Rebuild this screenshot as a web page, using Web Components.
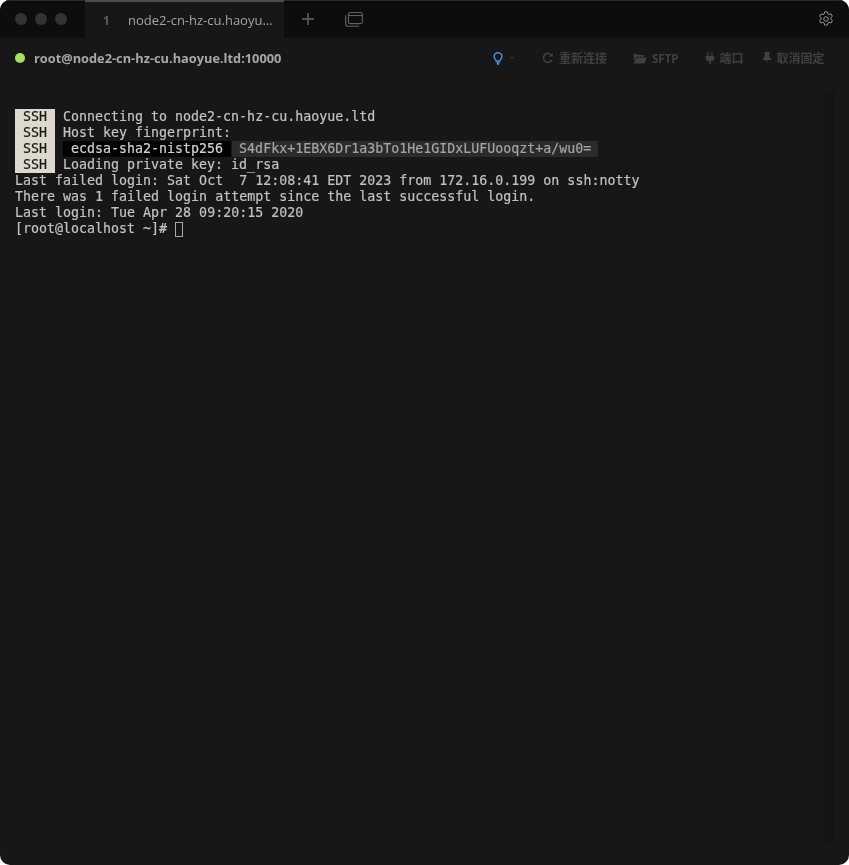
<!DOCTYPE html>
<html>
<head>
<meta charset="utf-8">
<style>
  html, body { margin: 0; height: 100%; background: #ffffff; }
  body { font-family: "Open Sans", "Noto Sans CJK SC", sans-serif; }
</style>
</head>
<body>
<term-window>
  <tab-bar slot="tabs"></tab-bar>
  <session-bar slot="session"></session-bar>
  <term-screen slot="screen"></term-screen>
</term-window>

<script>
class TermWindow extends HTMLElement {
  constructor() {
    super();
    this.attachShadow({ mode: "open" });
  }

  connectedCallback() {
    this.shadowRoot.innerHTML = `
      <style>
        :host {
          display: flex;
          flex-direction: column;
          width: 849px;
          height: 865px;
          background: #171717;
          border-radius: 10px;
          overflow: hidden;
        }
      </style>
      <slot name="tabs"></slot>
      <slot name="session"></slot>
      <slot name="screen"></slot>
    `;
  }
}
customElements.define("term-window", TermWindow);

class TabBar extends HTMLElement {
  constructor() {
    super();
    this.attachShadow({ mode: "open" });
  }

  connectedCallback() {
    this.shadowRoot.innerHTML = `
      <style>
        :host {
          display: flex;
          align-items: stretch;
          height: 38px;
          background: #0d0d0d;
          box-shadow: inset 0 1px #2a2a2a;
          font-family: "Open Sans", sans-serif;
        }
        .lights {
          display: flex;
          align-items: center;
          gap: 8px;
          width: 85px;
          box-sizing: border-box;
          padding: 0 0 0 15px;
        }
        .lights i {
          width: 12px;
          height: 12px;
          border-radius: 50%;
          background: #333333;
        }
        .tab {
          display: flex;
          align-items: center;
          width: 199px;
          box-sizing: border-box;
          padding: 0 0 0 18px;
          background: #171717;
          border-top: 2px solid #4d4d4d;
          color: #a3a3a3;
          font-size: 13px;
        }
        .num {
          width: 25px;
          color: #5c5c5c;
          font-weight: 700;
          font-size: 12px;
          will-change: transform;
        }
        .title { white-space: nowrap; will-change: transform; }
        .add { margin: 0 0 0 16px; align-self: center; display: block; }
        .win { margin: 0 0 0 29px; align-self: center; display: block; }
        .gear { margin: 0 15px 0 auto; align-self: center; display: block; }
      </style>
      <div class="lights"><i></i><i></i><i></i></div>
      <div class="tab"><span class="num">1</span><span class="title">node2-cn-hz-cu.haoyu…</span></div>
      <svg class="add" width="16" height="16" viewBox="0 0 16 16"><path d="M8 2v12M2 8h12" stroke="#616161" stroke-width="1.5" fill="none"/></svg>
      <svg class="win" width="18" height="16" viewBox="0 0 19 17" fill="none" stroke="#616161" stroke-width="1.2"><rect x="3.6" y="1.6" width="14.8" height="11.8" rx="2"/><path d="M3.6 4.8h14.8"/><path d="M.6 4.6v9.2a2.4 2.4 0 0 0 2.4 2.4h12"/></svg>
      <svg class="gear" width="16" height="16" viewBox="0 0 16 16" fill="none" stroke="#959595" stroke-width="1"><path d="M6.6.8h2.8l.4 2 1.2.7 2-.6 1.400 2.400-1.500 1.400v1.500l1.500 1.400-1.400 2.400-2-.6-1.200.7-.4 2H6.600l-.4-2-1.200-.7-2 .6-1.400-2.400 1.500-1.400V6.700L1.600 5.300 3 2.900l2 .6 1.200-.7z" stroke-linejoin="round"/><circle cx="8" cy="8" r="2.300"/></svg>
    `;
  }
}
customElements.define("tab-bar", TabBar);

class SessionBar extends HTMLElement {
  constructor() {
    super();
    this.attachShadow({ mode: "open" });
  }

  connectedCallback() {
    this.shadowRoot.innerHTML = `
      <style>
        :host {
          display: flex;
          align-items: center;
          height: 39px;
          padding: 0 24px 0 15px;
          font-family: "Open Sans", "Noto Sans CJK SC", sans-serif;
        }
        .dot {
          width: 10px;
          height: 10px;
          border-radius: 50%;
          background: #a3e45a;
          margin: 0 9px 0 0;
        }
        .host {
          color: #a8a8a8;
          font-size: 12.8px;
          font-weight: 700;
          white-space: nowrap;
          will-change: transform;
        }
        .actions {
          margin: 0 0 0 auto;
          display: flex;
          align-items: center;
          color: #404040;
          font-size: 12px;
          font-weight: 700;
          will-change: transform;
        }
        .item { display: flex; align-items: center; gap: 5px; white-space: nowrap; }
        svg { display: block; }
        .caret {
          width: 0;
          height: 0;
          border: 2.5px solid transparent;
          border-top-color: #3a3a3a;
          border-bottom: 0;
          margin: 0 0 0 7px;
        }
        .sftp { font-size: 11.5px; }
      </style>
      <span class="dot"></span>
      <span class="host">root@node2-cn-hz-cu.haoyue.ltd:10000</span>
      <div class="actions">
        <div class="item" style="gap:0">
          <svg width="10" height="13" viewBox="0 0 12 15" fill="none" stroke="#4a90e2" stroke-width="1.700"><path d="M3.800 10.500C3.500 8.800 1.300 7.800 1.300 5.200a4.700 4.700 0 0 1 9.400 0c0 2.600-2.200 3.600-2.500 5.300z"/><path d="M4.200 12.500h3.600M5 14.300h2"/></svg>
          <span class="caret"></span>
        </div>
        <div class="item" style="margin-left:28px">
          <svg width="12" height="12" viewBox="0 0 13 13" fill="none" stroke="#404040" stroke-width="1.800"><path d="M10.800 8.200A4.800 4.800 0 1 1 9.800 3"/><path d="M11.600 .8v4.200H7.400z" fill="#404040" stroke="none"/></svg>
          <span>重新连接</span>
        </div>
        <div class="item" style="margin-left:26px">
          <svg width="14" height="11" viewBox="0 0 15 12" fill="#404040"><path d="M0 2a1 1 0 0 1 1-1h3.500l1.300 1.300H11a1 1 0 0 1 1 1V4H3.500L1 9.500V3H0z"/><path d="M3.800 5H15l-2.600 6.500H.8z"/></svg>
          <span class="sftp">SFTP</span>
        </div>
        <div class="item" style="margin-left:26px">
          <svg width="10" height="12" viewBox="0 0 10 14" fill="#404040"><path d="M2 0h1.400v4H2zM6.600 0H8v4H6.600zM0 4.500h10V7a4 4 0 0 1-4 3.800V14H4v-3.200A4 4 0 0 1 0 7z"/></svg>
          <span>端口</span>
        </div>
        <div class="item" style="margin-left:18px">
          <svg width="10" height="12" viewBox="0 0 11 14" fill="#404040"><path d="M2 0h7v1.500H7.800L8.400 6l2.100 2v1.300H6.200L5.500 14l-.7-4.700H.5V8l2.100-2 .6-4.500H2z"/></svg>
          <span>取消固定</span>
        </div>
      </div>
    `;
  }
}
customElements.define("session-bar", SessionBar);

class SshLine extends HTMLElement {
  constructor() {
    super();
    this.attachShadow({ mode: "open" });
  }

  connectedCallback() {
    this.shadowRoot.innerHTML = `
      <style>
        :host { display: flex; height: 16px; white-space: pre; }
        .tag {
          width: 40px;
          margin: 0 8px 0 0;
          background: #ddd9cc;
          color: #171717;
          text-align: center;
        }
      </style>
      <span class="tag">SSH</span><span><slot></slot></span>
    `;
  }
}
customElements.define("ssh-line", SshLine);

class TermScreen extends HTMLElement {
  constructor() {
    super();
    this.attachShadow({ mode: "open" });
  }

  connectedCallback() {
    this.shadowRoot.innerHTML = `
      <style>
        :host {
          display: flex;
          flex: 1;
          position: relative;
          box-sizing: border-box;
          padding: 32px 0 0 15px;
          color: #c2c2c2;
          font-family: "DejaVu Sans Mono", monospace;
          font-size: 13.3px;
          line-height: 16px;
          -webkit-text-stroke: 0.2px currentColor;
        }
        .lines { display: flex; flex-direction: column; will-change: transform; }
        .line { height: 16px; white-space: pre; }
        .algo { background: #000000; color: #d0d0d0; padding: 0 8px; display: inline-block; }
        .hash { background: #2b2b2b; color: #a3a3a3; padding: 0 7px; display: inline-block; margin-left: 1px; }
        .cursor {
          display: inline-block;
          width: 8px;
          height: 15px;
          box-sizing: border-box;
          border: 1px solid #a8a8a8;
          vertical-align: -4px;
        }
        .scroll {
          position: absolute;
          right: 15px;
          top: 16px;
          bottom: 20px;
          width: 9px;
          background: #141414;
        }
      </style>
      <div class="lines">
        <ssh-line>Connecting to node2-cn-hz-cu.haoyue.ltd</ssh-line>
        <ssh-line>Host key fingerprint:</ssh-line>
        <ssh-line><span class="algo">ecdsa-sha2-nistp256</span><span class="hash">S4dFkx+1EBX6Dr1a3bTo1He1GIDxLUFUooqzt+a/wu0=</span></ssh-line>
        <ssh-line>Loading private key: id_rsa</ssh-line>
        <div class="line">Last failed login: Sat Oct  7 12:08:41 EDT 2023 from 172.16.0.199 on ssh:notty</div>
        <div class="line">There was 1 failed login attempt since the last successful login.</div>
        <div class="line">Last login: Tue Apr 28 09:20:15 2020</div>
        <div class="line">[root@localhost ~]# <span class="cursor"></span></div>
      </div>
      <div class="scroll"></div>
    `;
  }
}
customElements.define("term-screen", TermScreen);
</script>
</body>
</html>
